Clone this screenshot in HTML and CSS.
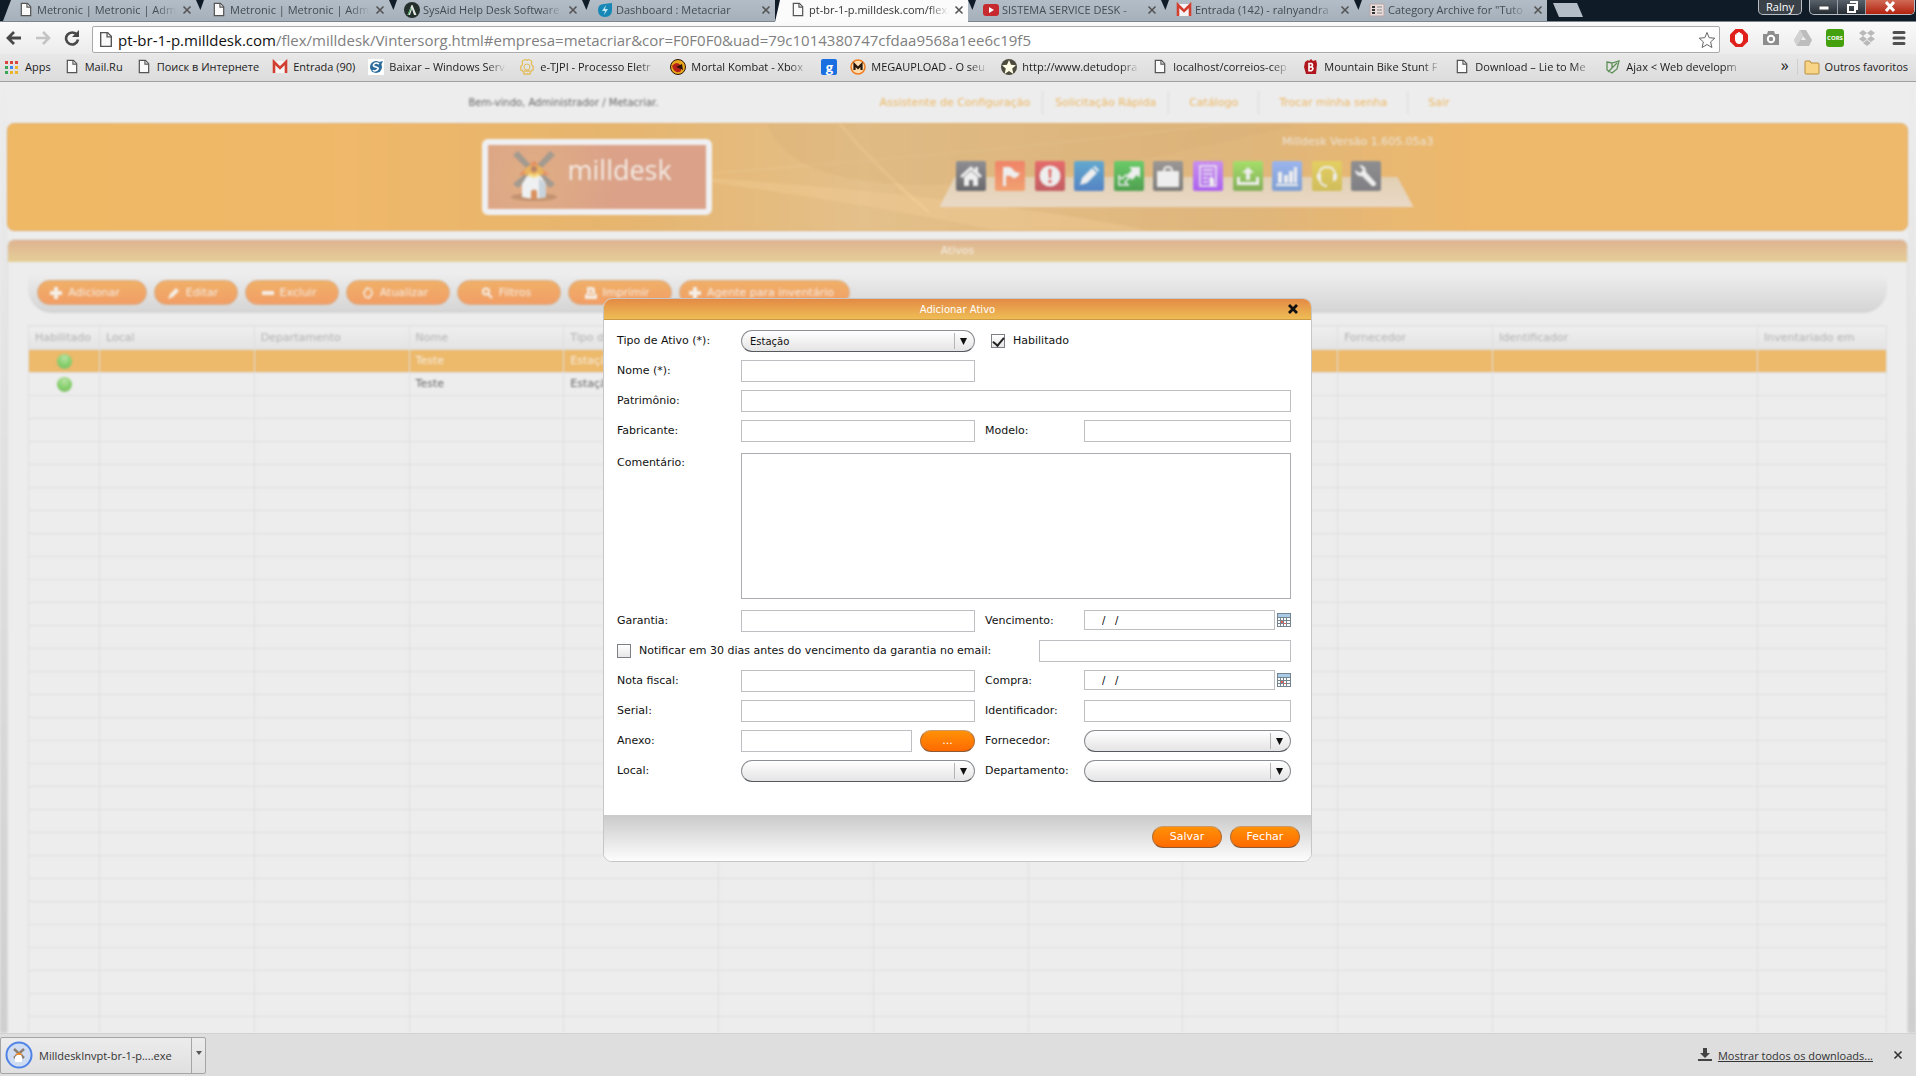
FILE: index.html
```html
<!DOCTYPE html>
<html lang="pt-BR">
<head>
<meta charset="utf-8">
<title>Milldesk</title>
<link rel="stylesheet" href="styles.css">
</head>
<body>
<svg class="defs" aria-hidden="true">
  <symbol id="page" viewBox="0 0 12 16"><path d="M1 1.500h6.500L11 5v9.500H1z" fill="#fafafa" stroke="#555" stroke-width="1.300"/><path d="M7 1.500V5.500h4" fill="none" stroke="#555" stroke-width="1.200"/></symbol>
  <symbol id="gmail" viewBox="0 0 16 14"><path d="M1 1h14v12H1z" fill="#f4f4f4"/><path d="M2 13V2l6 6 6-6v11" fill="none" stroke="#d23f31" stroke-width="2.600"/></symbol>
  <symbol id="cross" viewBox="0 0 10 10"><path d="M1.500 1.500l7 7M8.500 1.500l-7 7" stroke="currentColor" stroke-width="1.600"/></symbol>
  <symbol id="mill" viewBox="0 0 48 52">
    <ellipse cx="24" cy="47" rx="23" ry="4" fill="#a87a5c" opacity=".5"/>
    <path d="M3 5l5-4 13 14-4 4zM40 1l5 4-14 14-4-4zM3 34l14-12 4 4L8 38zM45 34L31 22l-4 4 13 12z" fill="#a39a90"/>
    <path d="M9 25l15-14 15 14z" fill="#e58b5f"/><path d="M14 24q0-9 10-9t10 9l-10 4z" fill="#e8b35e"/>
    <path d="M12 34l5-8h14l5 8v13q-12 3-24 0z" fill="#eef0f2"/><path d="M29 28l7 6v13l-7 1z" fill="#c9d3dc"/>
    <path d="M21 49v-8q3-3 6 0v8z" fill="#d9915f"/><circle cx="24" cy="19" r="3" fill="#b9826a"/><path d="M19 24q5 5 10 0" stroke="#f6e08c" stroke-width="3" fill="none"/>
  </symbol>
  <symbol id="calendar" viewBox="0 0 14 14"><path d="M0 0h14v14H0z" fill="#75858f"/><path d="M1 1h12v3H1z" fill="#a9cbe8"/><path d="M1 5h2v2H1zM4 5h2v2H4zM7 5h2v2H7zM10 5h3v2h-3zM1 8h2v2H1zM7 8h2v2H7zM10 8h3v2h-3zM1 11h2v2H1zM4 11h2v2H4zM7 11h2v2H7zM10 11h3v2h-3z" fill="#fff"/><path d="M4 8h2v2H4zM7 10h2v1H7z" fill="#e8625c"/></symbol>
</svg>

<header class="browser">
  <div class="tabstrip">
    <div class="tab"><svg class="ico page"><use href="#page"/></svg><span class="tab-title">Metronic | Metronic | Admin</span><button class="tab-close" aria-label="Fechar guia"><svg><use href="#cross"/></svg></button></div>
    <div class="tab"><svg class="ico page"><use href="#page"/></svg><span class="tab-title">Metronic | Metronic | Admin</span><button class="tab-close" aria-label="Fechar guia"><svg><use href="#cross"/></svg></button></div>
    <div class="tab"><svg class="ico" viewBox="0 0 16 16"><circle cx="8" cy="8" r="8" fill="#23302c"/><path d="M3.500 13L7.500 3h1l4 10h-2.500L8 7l-2 6z" fill="#dfe6e0"/><path d="M4 13l3-7" stroke="#3d9a53"/></svg><span class="tab-title">SysAid Help Desk Software</span><button class="tab-close" aria-label="Fechar guia"><svg><use href="#cross"/></svg></button></div>
    <div class="tab"><svg class="ico" viewBox="0 0 16 16"><path d="M1 8q0-6 6-6l8-1v7q0 7-7 7t-7-7z" fill="#1787b5"/><path d="M9 3L5 9h3l-1 4 4-6H8z" fill="#bfe6f4"/></svg><span class="tab-title">Dashboard : Metacriar</span><button class="tab-close" aria-label="Fechar guia"><svg><use href="#cross"/></svg></button></div>
    <div class="tab active"><svg class="ico page"><use href="#page"/></svg><span class="tab-title">pt-br-1-p.milldesk.com/flex/</span><button class="tab-close" aria-label="Fechar guia"><svg><use href="#cross"/></svg></button></div>
    <div class="tab"><svg class="ico" viewBox="0 0 16 16"><rect y="2" width="16" height="12" rx="3" fill="#c62a2e"/><path d="M6 5l5 3-5 3z" fill="#fff"/></svg><span class="tab-title">SISTEMA SERVICE DESK -</span><button class="tab-close" aria-label="Fechar guia"><svg><use href="#cross"/></svg></button></div>
    <div class="tab"><svg class="ico"><use href="#gmail"/></svg><span class="tab-title">Entrada (142) - ralnyandra</span><button class="tab-close" aria-label="Fechar guia"><svg><use href="#cross"/></svg></button></div>
    <div class="tab"><svg class="ico" viewBox="0 0 16 16"><path d="M1 2h14v12H1z" fill="#e8dcdc" stroke="#b9a5a5"/><path d="M3 5h3M3 8h3M3 11h3" stroke="#333" stroke-width="2"/><path d="M8 5h5M8 8h5M8 11h5" stroke="#888"/></svg><span class="tab-title">Category Archive for "Tuto</span><button class="tab-close" aria-label="Fechar guia"><svg><use href="#cross"/></svg></button></div>
    <button class="new-tab" aria-label="Nova guia"></button>
    <div class="window-controls">
      <button class="user">Ralny</button>
      <div class="window-buttons">
        <button aria-label="Minimizar"><svg viewBox="0 0 14 12"><path d="M2 5h10v4H2z" fill="#fff" stroke="#444"/></svg></button>
        <button aria-label="Restaurar"><svg viewBox="0 0 14 12"><path d="M5 1h7v7h-2M3 4h7v7H3z" fill="none" stroke="#fff" stroke-width="2"/></svg></button>
        <button class="win-close" aria-label="Fechar"><svg viewBox="0 0 14 12"><path d="M3 1l8 9M11 1l-8 9" stroke="#fff" stroke-width="3"/></svg></button>
      </div>
    </div>
  </div>

  <div class="navbar">
    <button aria-label="Voltar"><svg viewBox="0 0 16 16"><path d="M15 8H3M8 2L2 8l6 6" fill="none" stroke="#484848" stroke-width="2.800"/></svg></button>
    <button aria-label="Avançar"><svg viewBox="0 0 16 16"><path d="M1 8h12M8 2l6 6-6 6" fill="none" stroke="#c4c4c4" stroke-width="2.600"/></svg></button>
    <button aria-label="Recarregar"><svg viewBox="0 0 16 16"><path d="M13 5A6 6 0 1 0 14 9.500" fill="none" stroke="#484848" stroke-width="2.600"/><path d="M15 0v7H8z" fill="#484848"/></svg></button>
    <div class="address"><svg class="ico page"><use href="#page"/></svg><span class="url"><b>pt-br-1-p.milldesk.com</b>/flex/milldesk/Vintersorg.html#empresa=metacriar&amp;cor=F0F0F0&amp;uad=79c1014380747cfdaa9568a1ee6c19f5</span>
      <button aria-label="Favorito"><svg viewBox="0 0 18 18"><path d="M9 1.500l2.200 5.200 5.600.5-4.200 3.700 1.300 5.600L9 13.500l-4.900 3 1.300-5.600-4.200-3.700 5.600-.5z" fill="#fff" stroke="#666"/></svg></button></div>
    <div class="extensions">
      <button aria-label="Bloqueador"><svg viewBox="0 0 18 18"><path d="M5.500 0h7L18 5.500v7L12.500 18h-7L0 12.500v-7z" fill="#e0201b"/><path d="M5 8V5.500h1.500V4h1.700V3h1.600v1h1.700v1.500H13V11q-1 4-4 4t-4-4z" fill="#fff"/></svg></button>
      <button aria-label="Captura"><svg viewBox="0 0 18 18"><path d="M1 5h4l1-3h6l1 3h4v11H1z" fill="#8d8d8d"/><circle cx="9" cy="10" r="3.200" fill="none" stroke="#fff" stroke-width="2"/></svg></button>
      <button aria-label="Drive"><svg viewBox="0 0 18 18"><path d="M6 1h6l6 10-3 6H3l-3-6z" fill="#bdbdbd"/><path d="M6 1l3 5-6 11-3-6z" fill="#d2d2d2"/><path d="M9 7l3 4H7z" fill="#eee"/></svg></button>
      <button class="cors" aria-label="CORS">CORS</button>
      <button aria-label="Dropbox"><svg viewBox="0 0 18 18"><path d="M5 1l4 3-4 3-4-3zM13 1l4 3-4 3-4-3zM5 7l4 3-4 3-4-3zM13 7l4 3-4 3-4-3zM9 11l4 3-4 3-4-3z" fill="#b9b9b9"/></svg></button>
      <button aria-label="Menu"><svg viewBox="0 0 18 18"><path d="M4 3.500h10M4 9h10M4 14.500h10" stroke="#505050" stroke-width="3" stroke-linecap="round"/></svg></button>
    </div>
  </div>

  <nav class="bookmarks">
    <a href="#"><svg class="ico" viewBox="0 0 16 16"><path d="M1 2h3v3H1zM6 2h3v3H6zM11 2h3v3h-3z" fill="#d9453d"/><path d="M1 7h3v3H1z" fill="#3aa757"/><path d="M6 7h3v3H6z" fill="#4285f4"/><path d="M11 7h3v3h-3zM6 12h3v3H6zM11 12h3v3h-3z" fill="#eab42c"/><path d="M1 12h3v3H1z" fill="#3aa757"/></svg><span>Apps</span></a>
    <a href="#"><svg class="ico page"><use href="#page"/></svg><span>Mail.Ru</span></a>
    <a href="#"><svg class="ico page"><use href="#page"/></svg><span>Поиск в Интернете</span></a>
    <a href="#"><svg class="ico"><use href="#gmail"/></svg><span>Entrada (90)</span></a>
    <a href="#" class="long"><svg class="ico" viewBox="0 0 16 16"><path d="M0 0h16v16H0z" fill="#fff"/><circle cx="8" cy="8" r="6" fill="#2b6c9c"/><path d="M11 5q-3-2-5 0t2 3 1 3-4 0" fill="none" stroke="#fff" stroke-width="1.600"/><path d="M11 3l4-1-2 4z" fill="#2b6c9c"/></svg><span>Baixar – Windows Serv</span></a>
    <a href="#" class="long"><svg class="ico" viewBox="0 0 16 16"><path d="M4 5q-2-3 1-4 3-1 3 1 0-2 3-1t1 4M4 5q-3 2-2 6 2 0 3 4h6q1-4 3-4 1-4-2-6M5 12h6" fill="none" stroke="#e2bd5d" stroke-width="1.300"/><circle cx="8" cy="8" r="3" fill="none" stroke="#e2bd5d"/></svg><span>e-TJPI - Processo Eletr</span></a>
    <a href="#" class="long"><svg class="ico" viewBox="0 0 16 16"><circle cx="8" cy="8" r="7.500" fill="#e8a81d" stroke="#2e1507"/><path d="M2 7q5-6 9 0v5q-6 4-9-5z" fill="#b72018"/><path d="M6 8l6-3 1 6z" fill="#301207"/></svg><span>Mortal Kombat - Xbox</span></a>
    <a href="#" class="g" aria-label="g">g</a>
    <a href="#" class="long"><svg class="ico" viewBox="0 0 16 16"><circle cx="8" cy="8" r="7" fill="#ffdcae" stroke="#ef7b1d" stroke-width="1.500"/><path d="M4.500 11V5.500L8 9l3.500-3.500V11" fill="none" stroke="#26160c" stroke-width="2.200"/></svg><span>MEGAUPLOAD - O seu</span></a>
    <a href="#" class="long"><svg class="ico" viewBox="0 0 16 16"><circle cx="8" cy="8" r="8" fill="#4c4a3c"/><path d="M8 1l2 4.800 5 .4-3.800 3.300L12.400 15 8 12l-4.400 3 1.200-5.500L1 6.200l5-.4z" fill="#fffde6"/></svg><span>http://www.detudopra</span></a>
    <a href="#" class="long"><svg class="ico page"><use href="#page"/></svg><span>localhost/correios-cep</span></a>
    <a href="#" class="long"><svg class="ico" viewBox="0 0 16 16"><path d="M2 3l3-2 1 1 2-2 2 2 3-1 1 4-1 10H3L1 8z" fill="#b0161d"/><path d="M6 4.500h2.500q2 1.500 0 3.200 3 1.800 0 4H6zM6 8h3" fill="none" stroke="#fff" stroke-width="1.600"/></svg><span>Mountain Bike Stunt F</span></a>
    <a href="#" class="long"><svg class="ico page"><use href="#page"/></svg><span>Download – Lie to Me</span></a>
    <a href="#" class="long"><svg class="ico" viewBox="0 0 16 16"><path d="M2 3l5 1 7-2-2 8-5 4-5-3zM3 13L12 4M7 4v5" fill="none" stroke="#5e8f57" stroke-width="1.300"/></svg><span>Ajax &lt; Web developm</span></a>
    <button class="more" aria-label="Mais favoritos">»</button>
    <a href="#" class="others"><svg class="ico" viewBox="0 0 16 16"><path d="M1 3q0-1 1-1h4l1 2h7q1 0 1 1v9q0 1-1 1H2q-1 0-1-1z" fill="#f8d586" stroke="#b98d3c"/></svg><span>Outros favoritos</span></a>
  </nav>
</header>

<main class="content">
  <div class="app">
    <div class="topline">
      <span class="welcome">Bem-vindo, Administrador / Metacriar.</span>
      <nav><a href="#">Assistente de Configuração</a><a href="#">Solicitação Rápida</a><a href="#">Catálogo</a><a href="#">Trocar minha senha</a><a href="#">Sair</a></nav>
    </div>

    <div class="banner">
      <svg class="waves" viewBox="0 0 1000 108" preserveAspectRatio="none" aria-hidden="true">
        <path d="M300 60Q520 30 640 0" stroke="#efcf9f" stroke-width="2" fill="none" opacity=".25"/>
        <path d="M330 50Q500 70 600 108H520Q420 70 330 50z" fill="#f2cd96" opacity=".4"/>
        <path d="M438 0Q460 50 485 90" stroke="#f3cf98" stroke-width="2" fill="none" opacity=".6"/>
        <path d="M400 0Q410 60 480 62T680 0z" fill="#d2ab72" opacity=".25"/>
      </svg>
      <div class="banner-inner">
        <div class="logo"><svg><use href="#mill"/></svg><span>milldesk</span></div>
        <div class="modules">
          <span class="version">Milldesk Versão 1.605.05a3</span>
          <div class="shelf">
            <button class="m-dark" aria-label="Início"><svg viewBox="0 0 30 30"><path d="M4 15L15 5l4 4V6h3v5l4 4-2 2-9-8-9 8z"/><path d="M8 16l7-6 7 6v9h-5v-6h-4v6H8z"/></svg></button>
            <button class="m-orange" aria-label="Chamados"><svg viewBox="0 0 30 30"><path d="M8 6h3v19H8zM11 6q5-1 8 4 3 2 6 2-3 6-7 5-2-3-7-2z"/></svg></button>
            <button class="m-red" aria-label="Alertas"><svg viewBox="0 0 30 30"><circle cx="15" cy="15" r="10.500"/><path d="M13.500 8h3l-.5 9h-2zM13.500 19h3v3h-3z" fill="#dd6a68"/></svg></button>
            <button class="m-blue" aria-label="Editar"><svg viewBox="0 0 30 30"><path d="M6 24l2-7L18 7l5 5-10 10zM19 6l2-1 4 4-1 2z"/></svg></button>
            <button class="m-green" aria-label="Mudanças"><svg viewBox="0 0 30 30"><path d="M15 6h11v11l-3-3-5 5-5-5 5-5z"/><path d="M5 15v9h9l-3-3 4-4-3-3-4 4z" fill="none" stroke="#eee" stroke-width="1.500"/></svg></button>
            <button class="m-gray" aria-label="Ativos"><svg viewBox="0 0 30 30"><rect x="4" y="10" width="22" height="16" rx="1"/><path d="M11 10q0-4 4-4t4 4" fill="none" stroke="#eee" stroke-width="2"/></svg></button>
            <button class="m-purple" aria-label="Relatórios"><svg viewBox="0 0 30 30"><path d="M7 5h16v20H7zM10 9h10M10 13h10M10 17h5M10 21h5" fill="none" stroke="#eee" stroke-width="1.500"/><path d="M16 18l2-3 3 3v7h-4z"/></svg></button>
            <button class="m-lime" aria-label="Enviar"><svg viewBox="0 0 30 30"><path d="M15 6l6 6h-4v7h-4v-7H9zM4 16h3v5h16v-5h3v8H4z"/></svg></button>
            <button class="m-sky" aria-label="Gráficos"><svg viewBox="0 0 30 30"><path d="M4 23h22v2H4zM6 11h4v11H6zM12 14h4v8h-4zM17 10h4v12h-4zM22 6h3v16h-3z"/></svg></button>
            <button class="m-yellow" aria-label="Suporte"><svg viewBox="0 0 30 30"><path d="M7 17q-1-11 8-11t8 11M8 20q2 5 7 5" fill="none" stroke="#eee" stroke-width="2"/><path d="M5 13h4v7H7q-3-3-2-7zM25 13h-4v7h2q3-3 2-7z"/></svg></button>
            <button class="m-slate" aria-label="Configurações"><svg viewBox="0 0 30 30"><path d="M8 4q7 0 7 7l10 11q0 4-4 3L11 15q-6 1-7-6l5 3 3-3z"/></svg></button>
          </div>
        </div>
      </div>
    </div>

    <section class="panel">
      <h1>Ativos</h1>
      <div class="toolbar">
        <button class="w-add"><svg viewBox="0 0 12 12"><path d="M4 0h4v4h4v4H8v4H4V8H0V4h4z"/></svg>Adicionar</button>
        <button class="w-edit"><svg viewBox="0 0 12 12"><path d="M0 12l2-5 6-6 3 3-6 6z"/></svg>Editar</button>
        <button class="w-del"><svg viewBox="0 0 12 12"><path d="M0 4h12v4H0z"/></svg>Excluir</button>
        <button class="w-mid"><svg viewBox="0 0 12 12"><path d="M2 7V5l3-4 2 1M10 5v2l-3 4-2-1M8 1l2 4M4 11L2 7" fill="none" stroke="#f5eee6" stroke-width="1.500"/></svg>Atualizar</button>
        <button class="w-mid"><svg viewBox="0 0 12 12"><circle cx="5" cy="4.500" r="3" fill="none" stroke="#f5eee6" stroke-width="2"/><path d="M7 7l4 4" stroke="#f5eee6" stroke-width="2"/></svg>Filtros</button>
        <button class="w-mid"><svg viewBox="0 0 12 12"><path d="M2 7V0h6l2 2v5h2v5H0V7z"/><path d="M4 3h3M4 5h4M2 8h8" stroke="#efa268"/></svg>Imprimir</button>
        <button class="w-agent"><svg viewBox="0 0 12 12"><path d="M4 0h4v4h4v4H8v4H4V8H0V4h4z"/></svg>Agente para inventário</button>
      </div>
      <table>
        <colgroup><col class="c-on"><col><col><col><col><col><col><col><col><col><col class="c-id"><col class="c-inv"></colgroup>
        <thead><tr><th>Habilitado</th><th>Local</th><th>Departamento</th><th>Nome</th><th>Tipo de Ativo</th><th></th><th></th><th></th><th></th><th>Fornecedor</th><th>Identificador</th><th>Inventariado em</th></tr></thead>
        <tbody id="rows">
          <tr class="selected"><td><i class="led"></i></td><td></td><td></td><td>Teste</td><td>Estação</td><td></td><td></td><td></td><td></td><td></td><td></td><td></td></tr>
          <tr><td><i class="led"></i></td><td></td><td></td><td>Teste</td><td>Estação</td><td></td><td></td><td></td><td></td><td></td><td></td><td></td></tr>
        </tbody>
      </table>
    </section>
  </div>

  <div class="overlay">
    <form class="dialog" role="dialog" aria-labelledby="dialog-title">
      <div class="dialog-title"><h2 id="dialog-title">Adicionar Ativo</h2><button type="button" aria-label="Fechar janela"><svg viewBox="0 0 10 10"><path d="M1 1l8 8M9 1L1 9" stroke="#111" stroke-width="2.800"/></svg></button></div>
      <div class="fields">
        <label for="tipo">Tipo de Ativo (*):</label>
        <span class="select"><select id="tipo"><option>Estação</option></select></span>
        <span class="check wide2"><input type="checkbox" id="hab" checked><label for="hab">Habilitado</label></span>

        <label for="nome">Nome (*):</label><input type="text" id="nome" class="solo">

        <label for="patr">Patrimônio:</label><input type="text" id="patr" class="wide3">

        <label for="fabr">Fabricante:</label><input type="text" id="fabr">
        <label for="modelo" class="second">Modelo:</label><input type="text" id="modelo">

        <label for="coment" class="top">Comentário:</label><textarea id="coment" class="wide3"></textarea>

        <label for="gar">Garantia:</label><input type="text" id="gar">
        <label for="venc" class="second">Vencimento:</label>
        <span class="date"><input type="text" id="venc" value="/   /"><button type="button" aria-label="Calendário"><svg><use href="#calendar"/></svg></button></span>

        <div class="notify"><span class="check"><input type="checkbox" id="notif"><label for="notif">Notificar em 30 dias antes do vencimento da garantia no email:</label></span><input type="text" aria-label="Email"></div>

        <label for="nota">Nota fiscal:</label><input type="text" id="nota">
        <label for="compra" class="second">Compra:</label>
        <span class="date"><input type="text" id="compra" value="/   /"><button type="button" aria-label="Calendário"><svg><use href="#calendar"/></svg></button></span>

        <label for="serial">Serial:</label><input type="text" id="serial">
        <label for="ident" class="second">Identificador:</label><input type="text" id="ident">

        <label for="anexo">Anexo:</label>
        <span class="attach"><input type="text" id="anexo"><button type="button" class="pill">...</button></span>
        <label for="forn" class="second">Fornecedor:</label><span class="select"><select id="forn"><option></option></select></span>

        <label for="local">Local:</label><span class="select"><select id="local"><option></option></select></span>
        <label for="dep" class="second">Departamento:</label><span class="select"><select id="dep"><option></option></select></span>
      </div>
      <div class="dialog-actions"><button type="button" class="pill">Salvar</button><button type="button" class="pill">Fechar</button></div>
    </form>
  </div>
</main>

<footer class="downloads">
  <div class="download">
    <button class="file"><svg viewBox="0 0 28 28"><circle cx="14" cy="14" r="12.500" fill="#cfdcf2" stroke="#4f83e6" stroke-width="2"/><path d="M9 8l10 9M19 8L9 17" stroke="#8d7f73" stroke-width="2.500"/><path d="M10 14q4-5 8 0z" fill="#e88a2a"/><path d="M10 16l2-2h4l1 2v5h-7z" fill="#fff"/></svg><span>MilldeskInvpt-br-1-p....exe</span></button>
    <button class="file-menu" aria-label="Opções"><svg viewBox="0 0 6 4"><path d="M0 0h6L3 4z" fill="#555"/></svg></button>
  </div>
  <div class="download-links">
    <svg viewBox="0 0 14 14"><path d="M5 0h4v5h3l-5 5-5-5h3zM0 11h14v2H0z" fill="#444"/></svg>
    <a href="#">Mostrar todos os downloads...</a>
    <button aria-label="Fechar barra"><svg><use href="#cross"/></svg></button>
  </div>
</footer>
<script src="rows.js"></script>
</body>
</html>
```
FILE: rows.js
```js
// Fill the rest of the grid with empty rows.
const body = document.getElementById('rows');
for (let i = 0; i < 40; i++) {
  const row = body.insertRow();
  for (let c = 0; c < 12; c++) row.insertCell();
}
```
FILE: styles.css
```css
* { box-sizing: border-box; }
body {
  margin: 0;
  height: 100vh;
  display: flex;
  flex-direction: column;
  overflow: hidden;
  background: #ededed;
  font-family: "DejaVu Sans", sans-serif;
  font-size: 10px;
  color: #111;
}
button { border: 0; padding: 0; background: none; font: inherit; color: inherit; }
a { color: inherit; text-decoration: none; }
.defs { position: absolute; width: 0; height: 0; }

/* Browser frame */
.browser, .downloads { flex: none; font-family: "Open Sans", sans-serif; font-size: 11px; }
.tabstrip {
  display: flex;
  height: 22px;
  padding-left: 3px;
  background: #0f1c27;
  border-bottom: 1px solid #7d858c;
}
.ico { width: 16px; height: 16px; flex: none; }
.ico.page { height: 15px; }
.tab {
  position: relative;
  flex: 0 1 193px;
  min-width: 0;
  display: flex;
  align-items: center;
  gap: 3px;
  height: 21px;
  padding: 0 2px 2px 15px;
  background: linear-gradient(#b3bdc7, #a5b0bb);
  color: #444b52;
}
.tab::before {
  content: "";
  position: absolute;
  left: 0;
  top: 0;
  width: 8px;
  height: 10px;
  background: #0f1c27;
  clip-path: polygon(0 0, 100% 0, 55% 100%);
}
.tab:first-child::before { height: 21px; clip-path: polygon(0 0, 100% 0, 0 100%); }
.tab.active {
  height: 22px;
  padding-bottom: 3px;
  background: #fbfbfb;
  color: #333;
  clip-path: polygon(5px 0, 100% 0, 100% 100%, 0 100%);
}
.tab.active::before { display: none; }
.tab-title {
  flex: 1;
  overflow: hidden;
  white-space: nowrap;
  mask-image: linear-gradient(90deg, #000 85%, transparent);
}
.tab-close { width: 14px; height: 14px; display: grid; place-items: center; color: #555; }
.tab-close svg { width: 10px; height: 10px; }
.new-tab {
  width: 30px;
  height: 14px;
  margin: 3px 0 0 6px;
  background: #b3bdc7;
  clip-path: polygon(0 0, 80% 0, 100% 100%, 20% 100%);
}
.window-controls { margin-left: auto; display: flex; gap: 7px; align-items: flex-start; padding-right: 1px; }
.user, .window-buttons { height: 15px; border: 1px solid #b9bec4; border-top: 0; border-radius: 0 0 5px 5px; overflow: hidden; }
.user { width: 44px; background: #3a4149; color: #fff; line-height: 12px; }
.window-buttons { display: flex; background: linear-gradient(#59616a, #252c34); }
.window-buttons button { width: 28px; display: grid; place-items: center; border-right: 1px solid #9aa0a6; }
.window-buttons .win-close { width: 48px; border: 0; background: linear-gradient(#d06a55, #b3220f); }
.window-buttons svg { width: 14px; height: 12px; }

.navbar { display: flex; align-items: center; height: 32px; padding: 0 8px 0 6px; gap: 13px; background: linear-gradient(#fafafa, #ececec); }
.navbar > button { width: 16px; height: 16px; }
.navbar svg { display: block; }
.address {
  flex: 1;
  min-width: 0;
  display: flex;
  align-items: center;
  gap: 4px;
  height: 27px;
  margin: 3px 0 0 -1px;
  padding: 0 3px 0 5px;
  border: 1px solid #a9a9a9;
  border-radius: 2px;
  background: #fff;
}
.address svg.page { height: 17px; }
.address button { width: 18px; height: 18px; margin-left: auto; }
.url { font-size: 15px; color: #808080; white-space: nowrap; }
.url b { font-weight: 400; color: #111; }
.extensions { display: flex; gap: 14px; margin-left: -3px; }
.extensions button { width: 18px; height: 18px; }
.extensions .cors { border-radius: 3px; background: #45a00e; color: #fff; font: 700 6px/18px "Open Sans", sans-serif; }

.bookmarks { display: flex; align-items: center; gap: 13px; height: 28px; padding: 0 8px 2px 4px; background: linear-gradient(#e8e8e8, #dcdcdc); border-bottom: 1px solid #a0a0a0; color: #1c1c1c; }
.bookmarks a { display: flex; align-items: center; gap: 5px; white-space: nowrap; }
.bookmarks a.long span { width: 117px; overflow: hidden; mask-image: linear-gradient(90deg, #000 84%, transparent); }
.bookmarks a.g { width: 16px; height: 16px; justify-content: center; border-radius: 2px; background: #1a6fe0; color: #fff; font: 700 13px/14px "Open Sans", sans-serif; }
.more { margin-left: auto; padding-bottom: 4px; font-size: 16px; line-height: 18px; }
.bookmarks .others { padding-left: 6px; margin-left: -5px; border-left: 1px solid #cfcfcf; }

/* Application */
.content { position: relative; flex: 1; min-height: 0; overflow: hidden; }
.app {
  display: flex;
  flex-direction: column;
  height: 100%;
  padding: 0 8px 0 7px;
  background: linear-gradient(90deg, transparent 8px, #ededed 8px, #ededed calc(100% - 8px), transparent calc(100% - 8px)), linear-gradient(#ededed, #e4e4e4 30%, #cfcfcf);
  filter: blur(1px);
}
.topline { flex: none; display: flex; justify-content: space-between; align-items: center; width: 984px; margin: 0 auto; height: 41px; color: #666; }
.topline nav { display: flex; color: #ecb660; font-size: 11px; }
.topline .welcome { padding-left: 3px; }
.topline a { padding: 5px 20px; border-right: 1px solid #dadada; }
.topline a:nth-child(-n+2) { padding: 5px 12px; }
.topline a:last-child { padding-right: 0; border: 0; }
.banner {
  flex: none;
  position: relative;
  height: 108px;
  border: 1px solid #dfae6c;
  border-radius: 7px;
  background: linear-gradient(90deg, #efb864, #efb86a 18%, #e6b56e 32%, #e4c08a 45%, #dfb67c 65%, #efb96b 78%, #efb96b);
  overflow: hidden;
}
.waves { position: absolute; inset: 0; width: 100%; height: 100%; }
.banner-inner { position: relative; display: flex; justify-content: space-between; width: 952px; height: 100%; margin: 0 auto; }
.logo {
  display: flex;
  gap: 10px;
  width: 230px;
  height: 76px;
  margin-top: 15px;
  padding: 4px 0 0 22px;
  border: 6px solid #f0f0f2;
  border-radius: 6px;
  background: radial-gradient(circle at 20% 50%, #dfae84, #dba189 50%);
  color: #f3ebe4;
  font: 27px/42px "Open Sans", sans-serif;
}
.logo svg { width: 48px; height: 54px; }
.modules { width: 494px; display: flex; flex-direction: column; }
.version { margin-top: 11px; color: #ece4d8; font-size: 11px; line-height: 14px; text-align: right; }
.shelf { position: relative; display: flex; justify-content: space-between; height: 46px; margin: 12px 20px 0 0; padding: 0 32px 0 16px; }
.shelf::before { content: ""; position: absolute; inset: 16px 0 0; background: linear-gradient(#e2d0b4, #ead9c6); clip-path: polygon(15px 0, calc(100% - 16px) 0, 100% 100%, 0 100%); }
.shelf button { position: relative; width: 30px; height: 30px; border-radius: 2px; }
.shelf svg { display: block; fill: #eeeeee; }
.m-dark { background: linear-gradient(#8f8f93, #69696d); }
.m-orange { background: linear-gradient(#f08468, #f1a272); }
.m-red { background: linear-gradient(#e56b6b, #c25e63); }
.m-blue { background: linear-gradient(#62a9cf, #5583c4); }
.m-green { background: linear-gradient(#6acb68, #4f9f50); }
.m-gray { background: linear-gradient(#9b9794, #7e7c79); }
.m-purple { background: linear-gradient(#c990ee, #ac62ee); }
.m-lime { background: linear-gradient(#a5df6a, #84ae59); }
.m-sky { background: linear-gradient(#9bb5ee, #7f9fd2); }
.m-yellow { background: linear-gradient(#e4cf62, #d0bd5c); }
.m-slate { background: linear-gradient(#8f8f91, #808084); }

.panel { flex: 1; min-height: 0; margin-top: 8px; padding: 0 20px; border: 1px solid #dddddd; border-bottom: 0; border-radius: 7px 7px 0 0; background: #ededed; overflow: hidden; }
.panel h1 { margin: 0 -20px; height: 22px; background: linear-gradient(#deb390, #e6cf98); color: #f6efe6; font-size: 11px; font-weight: 400; line-height: 22px; text-align: center; }
.toolbar { display: flex; gap: 7px; height: 43px; margin: 8px 0 12px; padding: 10px 9px 0; border-radius: 0 0 24px 24px; background: linear-gradient(#ededed 10%, #d4d4d4); }
.toolbar button { display: flex; align-items: center; justify-content: center; gap: 6px; height: 25px; padding-right: 6px; border: 1px solid #d6a983; border-radius: 13px; background: linear-gradient(#f0b068, #f29e66); color: #f5eee6; font-size: 11px; white-space: nowrap; }
.toolbar svg { width: 12px; height: 12px; fill: #f5eee6; }
.toolbar .w-add { width: 110px; padding-right: 14px; }
.toolbar .w-edit { width: 84px; }
.toolbar .w-del { width: 94px; }
.toolbar .w-mid { width: 104px; }
.toolbar .w-agent { width: 171px; }

table { width: 100%; border-collapse: collapse; table-layout: fixed; border: 1px solid #d9d9d9; font-size: 11px; }
.c-on { width: 71px; }
.c-id { width: 265px; }
.c-inv { width: 129px; }
th, td { height: 23px; padding: 0 6px; border: 1px solid #dedede; text-align: left; font-weight: 400; line-height: 16px; white-space: nowrap; }
th { height: 24px; background: linear-gradient(#efefef, #e3e3e3); color: #b2b2b2; }
td { color: #666; }
.selected td { background: #edb96b; color: #f6efe2; }
td:first-child { text-align: center; }
.led { display: block; width: 15px; height: 15px; margin: 0 auto; border-radius: 50%; background: radial-gradient(circle at 50% 25%, #b8e3a4, #80cc66 60%, #8cb87c); }

/* Dialog */
.overlay { position: absolute; inset: 0; display: grid; place-items: center; padding: 45px 1px 0 0; }
.dialog { width: 709px; border: 1px solid #c6c6c6; border-radius: 9px; background: #fff; overflow: hidden; }
.dialog-title { display: flex; align-items: center; height: 21px; padding: 0 13px; border-bottom: 1px solid #cb9a45; background: linear-gradient(#e38a45, #efbd55); }
.dialog-title h2 { flex: 1; margin: 0 0 0 10px; font-size: 10px; font-weight: 400; color: #fff; text-align: center; }
.dialog-title svg { display: block; width: 10px; height: 10px; }
.fields { display: grid; grid-template-columns: 124px 234px 109px 207px; row-gap: 8px; align-items: center; padding: 10px 0 33px 13px; }
.fields label { font-size: 11px; line-height: 20px; white-space: nowrap; }
.second { padding-left: 10px; }
.wide2 { grid-column: span 2; padding-left: 16px; }
.wide3 { grid-column: span 3; }
.solo { grid-column: 2 / 5; }
.fields input[type="text"], .fields textarea { width: 100%; height: 22px; padding: 0 5px; border: 1px solid #bdbfc2; background: #fff; font: inherit; }
.fields .solo[type="text"] { width: 234px; }
.fields textarea { display: block; height: 146px; margin: 3px 0; border-color: #a9adb2; resize: none; }
.fields .top { align-self: start; padding-top: 3px; }
.check { display: flex; align-items: center; gap: 8px; }
.check input { appearance: none; display: grid; place-items: center; width: 14px; height: 14px; margin: 0; border: 1px solid #7c8084; background: linear-gradient(#fff, #e6e6e6); }
.check input:checked::after { content: ""; width: 5px; height: 9px; margin-bottom: 3px; border: solid #222; border-width: 0 2px 2px 0; rotate: 40deg; }
.notify { grid-column: 1 / 5; display: flex; justify-content: space-between; }
.fields .notify > input[type="text"] { width: 252px; }
.date { display: flex; gap: 2px; height: 22px; }
.fields .date input[type="text"] { height: 20px; padding-left: 17px; white-space: pre; }
.date button { width: 14px; height: 14px; margin-top: 3px; }
.date svg { display: block; width: 14px; height: 14px; }
.attach { display: flex; gap: 8px; }
.attach .pill { flex: none; width: 55px; }
.select { position: relative; display: block; }
.select select { appearance: none; display: block; width: 100%; height: 22px; padding: 0 28px 0 8px; border: 1px solid #8c8f93; border-bottom-color: #55585c; border-radius: 11px; background: linear-gradient(#fff, #e4e4e4); font: inherit; color: #111; }
.select::before { content: ""; position: absolute; right: 20px; top: 3px; width: 1px; height: 16px; background: #b4b4b4; }
.select::after { content: ""; position: absolute; right: 8px; top: 8px; width: 7px; height: 7px; background: #111; clip-path: polygon(0 0, 100% 0, 50% 100%); }
.pill { height: 22px; border: 1px solid; border-color: #c99a68 #b5723a #8d5a35; border-radius: 11px; background: linear-gradient(#ff9108, #ff6a00); color: #fff; font-size: 11px; line-height: 18px; }
.dialog-actions { display: flex; justify-content: flex-end; gap: 8px; height: 46px; padding: 11px 11px; background: linear-gradient(#cacaca, #fdfdfd); }
.dialog-actions .pill { width: 70px; }

/* Download shelf */
.downloads { display: flex; align-items: center; justify-content: space-between; height: 43px; padding-right: 13px; background: #dedede; border-top: 1px solid #d2d2d2; color: #333; }
.download { display: flex; height: 37px; border: 1px solid #a5a5a5; border-radius: 2px; background: linear-gradient(#ececec, #e0e0e0); }
.file { display: flex; align-items: center; gap: 6px; width: 190px; padding-left: 4px; white-space: nowrap; }
.file svg { width: 28px; height: 28px; flex: none; }
.file-menu { width: 14px; padding-bottom: 10px; border-left: 1px solid #a5a5a5; }
.file-menu svg { width: 6px; height: 4px; }
.download-links { display: flex; align-items: center; gap: 6px; }
.download-links a { text-decoration: underline; }
.download-links > svg { width: 14px; height: 14px; }
.download-links button { width: 10px; height: 10px; margin-left: 14px; }
.download-links button svg { display: block; width: 10px; height: 10px; }
```
